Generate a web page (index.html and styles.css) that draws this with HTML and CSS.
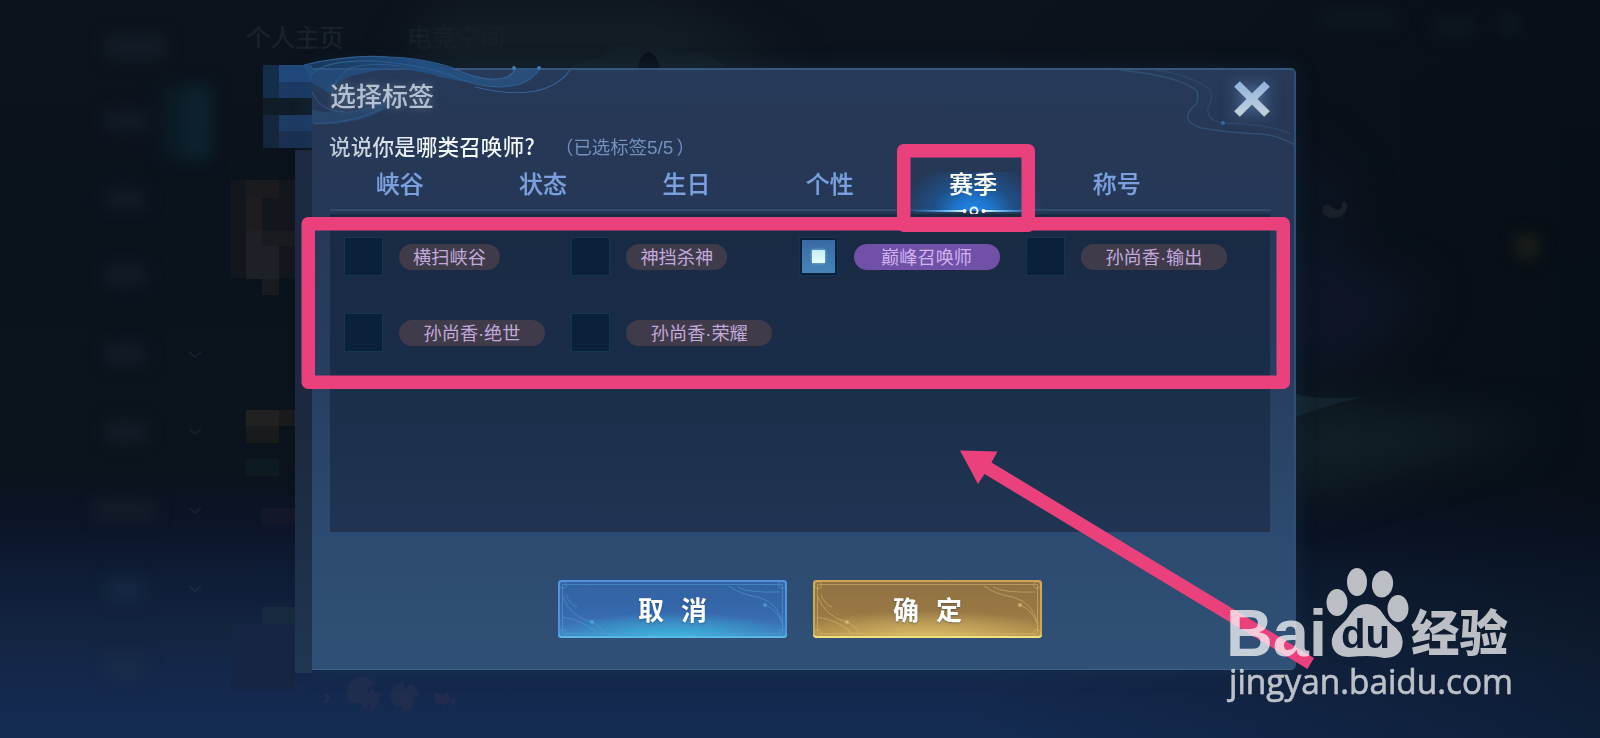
FILE: index.html
```html
<!DOCTYPE html>
<html lang="zh-CN">
<head>
  <meta charset="UTF-8" />
  <meta name="viewport" content="width=device-width, initial-scale=1" />
  <title>选择标签</title>
  <link rel="stylesheet" href="styles.css">
</head>
<body>
  <!-- Dimmed profile page behind the dialog -->
  <svg class="scene" width="1600" height="738" viewBox="0 0 1600 738" aria-hidden="true">
    <defs>
      <filter id="soft" x="-10%" y="-10%" width="120%" height="120%" color-interpolation-filters="sRGB"><feGaussianBlur stdDeviation="8" /></filter>
      <filter id="softer" x="-50%" y="-50%" width="200%" height="200%" color-interpolation-filters="sRGB"><feGaussianBlur stdDeviation="22" /></filter>
      <linearGradient id="tabGlow" x1="0" x2="1" y1="0" y2="0">
        <stop offset="0" stop-color="#0d2b38" stop-opacity="0" />
        <stop offset="1" stop-color="#0d2b38" stop-opacity=".9" />
      </linearGradient>
    </defs>
    <g filter="url(#softer)">
      <path d="M440 10h230l130 60H400z" fill="#1b262c" opacity=".6" />
      <path d="M1290 400l160 20 100 10-90 20-170 50z" fill="#14232a" opacity=".8" />
      <path d="M1290 240l140 50-60 70-80 30z" fill="#0e1526" />
      <path d="M1300 140q90 40 20 160z" fill="#0f172a" opacity=".7" />
    </g>
    <g filter="url(#soft)">
      <path d="M150 85h60v75h-60z" fill="url(#tabGlow)" />
      <path d="M105 36h60v22h-60zM105 112h42v18h-42zM105 190h42v18h-42zM105 265h42v20h-42zM105 344h42v20h-42zM105 422h42v20h-42zM95 502h60v18H95z" fill="#16202a" opacity=".8" />
      <path d="M105 580h40v20h-40zM105 658h40v20h-40z" fill="#1b3049" opacity=".6" />
      <path d="M1320 12h75v14h-75zM1435 20h40v14h-40zM1500 16h18v18h-18z" fill="#0f1a23" />
      <circle cx="1527" cy="246" r="13" fill="#1d1f1a" />
    </g>
    <path d="M560 78q10-18 40-20q12-20 45-8q20-8 34 4q20-8 44 10v6H560z" fill="#16212c" opacity=".5" />
    <path d="M638 68q2-14 11-16q8 3 11 16z" fill="#0a1019" />
    <path d="M1323 206q-3 9 8 12q14 1 16-10q0-5-2-7q-5 1-3 5q-3 7-9 2q-4-5-10-2" fill="#192029" />
    <path d="M1296 394q20 6 66 3q-40 10-66 20z" fill="#13232d" />
    <g fill="none" stroke="#16202c" stroke-width="2">
      <path d="M189 352l6 5 6-5M189 429l6 5 6-5M189 508l6 5 6-5" />
      <path d="M189 586l6 5 6-5" stroke="#182b44" />
      <path d="M325 694l4 4-4 4" stroke="#24304d" />
    </g>
    <g fill="#202d4f">
      <path d="M349 701a15 15 0 0 1 26-17q-9 2-7 9l5-6 2 8 4-5q3 12-7 22l-3-9-4 7q-5-10-9-7-5 2-7-2z" />
      <path d="M391 700a14 14 0 0 1 12-18l3 9 3-8q10 5 10 15l-6-3 1 9q-4 8-11 8l-2-7-4 3z" />
      <path d="M435 692l8 4 5-5 2 9-6 6-9-4zM450 700l7-1-5 8z" />
    </g>
    <text x="246" y="47" class="ghost">个人主页</text>
    <text x="407" y="47" class="ghost ghost-dim">电竞空间</text>
    <!-- hidden player name -->
    <g>
      <path d="M263 65h49v33h-49z" fill="#142d4b" />
      <path d="M279 65h33v17h-33z" fill="#20487a" />
      <path d="M279 82h33v16h-33z" fill="#1b3962" />
      <path d="M263 98h49v17h-49z" fill="#111c29" />
      <path d="M263 115h49v33h-49z" fill="#14253c" />
      <path d="M279 115h33v16h-33z" fill="#1d3b63" />
      <path d="M279 131h33v17h-33z" fill="#1b2f50" />
      <path d="M231 180h64v98h-64z" fill="#13171d" />
      <path d="M246 180h33v18h-33z" fill="#1b1b1f" />
      <path d="M246 198h16v33h-16z" fill="#1f1c1e" />
      <path d="M246 231h33v48h-33z" fill="#1d2027" />
      <path d="M262 231h33v15h-33zM262 279h17v16h-17z" fill="#181b1f" />
      <path d="M246 410h33v16h-33z" fill="#202120" />
      <path d="M279 410h16v16h-16zM246 426h33v17h-33z" fill="#191a1c" />
      <path d="M246 459h33v17h-33z" fill="#0d1a20" />
      <path d="M262 508h33v17h-33z" fill="#121729" />
      <path d="M262 607h33v17h-33z" fill="#172a3f" />
      <path d="M231 624h64v65h-64z" fill="#152543" />
    </g>
  </svg>

  <div class="dialog">
    <div class="dialog-edge"></div>
    <svg class="swirls" width="1001" height="130" viewBox="295 50 1001 130" aria-hidden="true">
      <defs>
        <linearGradient id="wave" x1="0" x2="1" y1="0" y2="0">
          <stop offset="0" stop-color="#24548a" stop-opacity=".5" />
          <stop offset=".5" stop-color="#234e80" />
          <stop offset="1" stop-color="#2b5584" stop-opacity=".7" />
        </linearGradient>
      </defs>
      <path d="M304 65Q350 54 390 57Q425 58 455 70Q485 82 504 78Q512 75 514 68H541Q530 88 500 87Q475 84 440 77Q400 64 365 73Q335 78 330 94L312 83Z" fill="url(#wave)" />
      <path d="M304 65Q350 54 390 57Q425 58 455 69M312 74Q325 60 375 61Q430 66 455 77Q490 92 520 84Q533 78 539 70" fill="none" stroke="#2c5d90" stroke-width="1.2" />
      <path d="M312 110Q350 118 385 100Q395 104 378 113Q350 126 318 124L312 123Z" fill="#295079" opacity=".6" />
      <path d="M312 92Q320 112 345 112M332 96Q332 80 350 68Q370 62 400 66M314 124Q360 122 382 108" fill="none" stroke="#305a88" />
      <path d="M455 69Q488 84 507 77Q514 73 516 69M475 87Q520 98 546 88Q562 82 570 70" fill="none" stroke="#33629a" stroke-width="1.2" />
      <g fill="none" stroke="#304f74" stroke-width="1.5">
        <path d="M1120 70Q1180 76 1197 91Q1200 103 1192 108Q1180 122 1202 128Q1230 133 1262 134Q1280 136 1295 145" />
        <path d="M1155 70Q1190 74 1210 90Q1214 99 1208 107Q1206 120 1222 123Q1270 124 1290 134" opacity=".6" />
      </g>
      <circle cx="1223" cy="123" r="2" fill="#3b6795" />
      <circle cx="514" cy="68" r="2" fill="#4378ac" />
      <circle cx="539" cy="68" r="2" fill="#4378ac" />
    </svg>

    <div class="dialog-header">
      <h1>选择标签</h1>
      <button class="close" aria-label="关闭">
        <svg width="36" height="36" viewBox="0 0 36 36">
          <defs>
            <linearGradient id="cross" x1="0" x2="0" y1="0" y2="36" gradientUnits="userSpaceOnUse">
              <stop offset="0" stop-color="#8fb2dc" />
              <stop offset="1" stop-color="#c6d3de" />
            </linearGradient>
          </defs>
          <path d="M3 3L33 33M33 3L3 33" fill="none" stroke="url(#cross)" stroke-width="8" />
        </svg>
      </button>
    </div>

    <div class="question">
      <h2>说说你是哪类召唤师?</h2>
      <span class="count">（已选标签<span class="num">5/5</span>）</span>
    </div>

    <nav class="tabs">
      <a href="#">峡谷</a>
      <a href="#">状态</a>
      <a href="#">生日</a>
      <a href="#">个性</a>
      <a href="#" class="active">赛季
        <svg class="marker" width="120" height="12" viewBox="0 0 120 12">
          <defs>
            <linearGradient id="beam" x1="0" x2="120" y1="0" y2="0" gradientUnits="userSpaceOnUse">
              <stop offset="0" stop-color="#2b8df0" stop-opacity=".2" />
              <stop offset=".3" stop-color="#7cc4ff" />
              <stop offset=".45" stop-color="#fff" />
              <stop offset=".55" stop-color="#fff" />
              <stop offset=".7" stop-color="#7cc4ff" />
              <stop offset="1" stop-color="#2b8df0" stop-opacity=".2" />
            </linearGradient>
          </defs>
          <path d="M0 5h51v2H0zM69 5h51v2H69z" fill="url(#beam)" />
          <circle cx="60" cy="6" r="3.5" fill="none" stroke="#e9f5ff" stroke-width="2" />
          <circle cx="50.500" cy="6" r="2" fill="#fff" />
          <circle cx="69.500" cy="6" r="2" fill="#fff" />
        </svg>
      </a>
      <a href="#">称号</a>
    </nav>

    <div class="tag-list">
      <label class="tag"><i class="box"></i><span class="pill">横扫峡谷</span></label>
      <label class="tag"><i class="box"></i><span class="pill">神挡杀神</span></label>
      <label class="tag"><i class="box checked"></i><span class="pill wide selected">巅峰召唤师</span></label>
      <label class="tag"><i class="box"></i><span class="pill wide">孙尚香·输出</span></label>
      <label class="tag"><i class="box"></i><span class="pill wide">孙尚香·绝世</span></label>
      <label class="tag"><i class="box"></i><span class="pill wide">孙尚香·荣耀</span></label>
    </div>

    <div class="actions">
      <button class="btn btn-cancel">
        <svg class="trim" width="229" height="58" viewBox="0 0 229 58">
          <path d="M4.500 4.500h220v49h-220z" />
          <path d="M4 15Q12 37 34 42Q42 45 46 53M4 37Q25 40 39 53M8 15Q12 25 19 27M171 6Q184 15 200 17Q222 23 225 47M180 7Q190 13 222 12M207 25Q219 30 224 43" />
          <circle cx="5" cy="5" r="3.500" /><circle cx="224" cy="5" r="3.500" />
          <circle cx="5" cy="53" r="3.500" /><circle cx="224" cy="53" r="3.500" />
          <g class="dots"><circle cx="34" cy="42" r="1.800" /><circle cx="207" cy="25" r="1.800" /></g>
        </svg>
        <span>取消</span>
      </button>
      <button class="btn btn-ok">
        <svg class="trim" width="229" height="58" viewBox="0 0 229 58">
          <path d="M4.500 4.500h220v49h-220z" />
          <path d="M4 15Q12 37 34 42Q42 45 46 53M4 37Q25 40 39 53M8 15Q12 25 19 27M171 6Q184 15 200 17Q222 23 225 47M180 7Q190 13 222 12M207 25Q219 30 224 43" />
          <circle cx="5" cy="5" r="3.500" /><circle cx="224" cy="5" r="3.500" />
          <circle cx="5" cy="53" r="3.500" /><circle cx="224" cy="53" r="3.500" />
          <g class="dots"><circle cx="34" cy="42" r="1.800" /><circle cx="207" cy="25" r="1.800" /></g>
        </svg>
        <span>确定</span>
      </button>
    </div>
  </div>

  <!-- Pink guide marks and watermark -->
  <svg class="overlay" width="1600" height="738" viewBox="0 0 1600 738">
    <g fill="none" stroke="#ea417c" stroke-width="13.500" stroke-linejoin="round">
      <rect x="308.250" y="223.750" width="975" height="158.500" />
      <rect x="903.750" y="150.750" width="124.500" height="74.500" />
    </g>
    <path d="M960 450.500L997.500 451.500L991.500 462.500L1314 658L1307.500 669L984.500 474L978 484Z" fill="#ea417c" />

    <defs>
      <mask id="duCut">
        <rect x="1320" y="560" width="100" height="110" fill="#fff" />
        <text x="1341" y="648" class="logo-du" textLength="49" lengthAdjust="spacingAndGlyphs">du</text>
      </mask>
    </defs>
    <g class="watermark">
      <text x="1226" y="655.500" class="logo-bai" textLength="101" lengthAdjust="spacingAndGlyphs">Bai</text>
      <g mask="url(#duCut)">
        <ellipse cx="1337" cy="602.500" rx="10.500" ry="13.500" />
        <ellipse cx="1357" cy="582" rx="10" ry="14" />
        <ellipse cx="1382.500" cy="584" rx="10.500" ry="13.500" transform="rotate(8 1382.500 584)" />
        <ellipse cx="1398" cy="608.500" rx="10.500" ry="13.500" />
        <path d="M1367 604Q1377 604 1383 614Q1388 622 1396 628Q1405 637 1402 647Q1399 658 1384 658Q1376 656 1367 656Q1358 656 1349 657Q1335 657 1332 645Q1330 635 1340 626Q1346 621 1351 613Q1357 604 1367 604Z" />
      </g>
      <text x="1411" y="651" class="logo-cn" textLength="97" lengthAdjust="spacingAndGlyphs">经验</text>
      <text x="1229" y="693.500" class="logo-url" textLength="284" lengthAdjust="spacingAndGlyphs">jingyan.baidu.com</text>
    </g>
  </svg>
</body>
</html>
```
FILE: styles.css
```css
* {
  box-sizing: border-box;
  margin: 0;
  padding: 0;
  font-family: "Noto Sans CJK SC", "Liberation Sans", sans-serif;
}
body {
  position: relative;
  width: 1600px;
  height: 738px;
  overflow: hidden;
  padding: 68px 0 0 312px;
  background:
    linear-gradient(90deg, rgba(3, 10, 14, 0) 60%, rgba(3, 10, 14, 0.4) 100%),
    linear-gradient(#0c131c 0, #0a121c 200px, #0b131c 470px, #0c152a 530px, #0f1d37 580px, #13243f 630px, #15284c 680px, #142c54 738px);
}
button {
  border: none;
  background: none;
  cursor: pointer;
}
.scene,
.overlay {
  position: absolute;
  left: 0;
  top: 0;
  pointer-events: none;
}
.ghost {
  font-size: 24.5px;
  fill: #19232a;
  stroke: #19232a;
  stroke-width: 0.6px;
}
.ghost-dim {
  fill: #152129;
  stroke: #152129;
}

/* Dialog */
.dialog {
  position: relative;
  display: flex;
  flex-direction: column;
  width: 984px;
  height: 602px;
  padding: 0 24px 0 18px;
  border-top: 2px solid #37577e;
  border-right: 2px solid #304f76;
  border-bottom: 1px solid #3d6288;
  border-radius: 0 5px 5px 0;
  background: linear-gradient(#273a59 0, #263856 60px, #263857 150px, #283f61 320px, #2d4a70 465px, #305177 600px);
  box-shadow: 0 0 22px rgba(35, 80, 110, 0.28);
}
.dialog-edge {
  position: absolute;
  left: -17px;
  top: 80px;
  width: 17px;
  height: 523px;
  background: linear-gradient(#1b2943, #1b2a3f 300px, #203653);
}
.swirls {
  position: absolute;
  left: -17px;
  top: -20px;
}
.dialog-header,
.question,
.tabs,
.tag-list,
.actions {
  position: relative;
}
.dialog-header {
  display: flex;
  justify-content: space-between;
  align-items: center;
  height: 49px;
}
h1 {
  font-size: 26px;
  font-weight: 500;
  color: #b3c0d2;
  text-shadow: 0 0 10px rgba(180, 190, 210, 0.35);
}
.close {
  width: 36px;
  height: 36px;
  margin-top: 8px;
  filter: drop-shadow(0 0 8px rgba(120, 165, 215, 0.6));
}
.question {
  display: flex;
  align-items: center;
  height: 53px;
}
h2 {
  width: 226px;
  margin: -1px 0 0 -1px;
  font-size: 21.7px;
  font-weight: 500;
  white-space: nowrap;
  color: transparent;
  background: linear-gradient(90deg, #b9c3d2, #f4f8ff 45%);
  -webkit-background-clip: text;
  background-clip: text;
}
.count {
  margin-top: 1px;
  font-size: 18.4px;
  color: #7290bd;
}
.num {
  margin-right: 3px;
  font-family: "Liberation Sans", sans-serif;
  font-size: 19px;
}
.tabs {
  display: flex;
  width: 941px;
  height: 39px;
  border-bottom: 2px solid #2e4b6a;
}
.tabs a {
  position: relative;
  left: -2px;
  flex-shrink: 0;
  width: 143.4px;
  height: 39px;
  line-height: 22px;
  text-align: center;
  font-size: 24px;
  font-weight: 500;
  color: #7ba0dd;
  -webkit-text-stroke: 0.2px currentColor;
  text-decoration: none;
}
.tabs .active {
  color: #fff;
  background: radial-gradient(ellipse 72px 50px at 50% 100%, #2186ea 0, #1e75cc 25%, rgba(28, 90, 155, 0.7) 55%, rgba(30, 75, 125, 0) 100%);
}
.marker {
  position: absolute;
  left: 12px;
  bottom: -6px;
}

/* Tag checkboxes */
.tag-list {
  display: grid;
  grid-template-columns: repeat(4, 227.3px);
  grid-auto-rows: 39px;
  row-gap: 37px;
  width: 940px;
  height: 318px;
  margin-top: 3px;
  padding: 23px 0 0 14px;
  background: linear-gradient(#192a43, #1a2d48 150px, #1f3553);
}
.tag {
  display: flex;
  align-items: center;
}
.box {
  width: 39px;
  height: 39px;
  margin-right: 16px;
  border: 1px solid #153653;
  background: #0b2039;
}
.box.checked {
  display: flex;
  align-items: center;
  justify-content: center;
  background: linear-gradient(#3869a3, #4685b8) content-box, #0b2039;
  padding: 2px;
}
.box.checked::after {
  content: "";
  width: 13px;
  height: 13px;
  background: linear-gradient(#c5ecfa, #e6ffff);
  box-shadow: 0 0 3px #8bc3e2;
}
.pill {
  width: 101px;
  height: 26px;
  border-radius: 13px;
  line-height: 29px;
  text-align: center;
  font-family: "Liberation Sans", "Noto Sans CJK SC", sans-serif;
  font-size: 18.2px;
  color: #c2a9dc;
  background: #403b4a;
}
.pill.wide {
  width: 146px;
}
.pill.selected {
  color: #cfb2ee;
  background: #7150a8;
}

/* Buttons */
.actions {
  display: flex;
  justify-content: center;
  gap: 26px;
  padding-top: 48px;
}
.btn {
  position: relative;
  width: 229px;
  height: 58px;
  border-radius: 3px;
  font-size: 26px;
  font-weight: 700;
  color: #fff;
}
.btn span {
  position: relative;
  top: -1px;
  letter-spacing: 17px;
  margin-right: -17px;
  text-shadow: 0 1px 2px rgba(20, 40, 80, 0.4);
}
.trim {
  position: absolute;
  left: 0;
  top: 0;
  fill: none;
  opacity: 0.5;
}
.btn-cancel {
  background: radial-gradient(ellipse 130px 26px at 50% 100%, #3cb7dc, rgba(60, 170, 215, 0)), linear-gradient(#31629f, #3769ae 60%, #407fc0);
  box-shadow: inset 0 -2px 1px #57bce9, inset 0 0 0 2px #5590dc;
}
.btn-cancel .trim {
  stroke: #55a5dc;
}
.btn-cancel .dots {
  fill: #5cdcff;
}
.btn-ok {
  background: radial-gradient(ellipse 140px 28px at 50% 100%, #d9bc68, rgba(205, 170, 90, 0)), linear-gradient(#8f7043, #997944 60%, #b08c4a);
  box-shadow: inset 0 -2px 1px #f4e481, inset 0 0 0 2px #cda552;
}
.btn-ok .trim {
  stroke: #e3c177;
}
.btn-ok .dots {
  fill: #fff3a0;
}

/* Watermark */
.watermark {
  fill: #fff;
  opacity: 0.72;
}
.logo-bai {
  font: 700 66px "Liberation Sans", Arial, sans-serif;
}
.logo-du {
  font: 700 41px "Liberation Sans", Arial, sans-serif;
  fill: #000;
}
.logo-cn {
  font: 900 49px "Noto Sans CJK SC", sans-serif;
}
.logo-url {
  font: 500 34px "Open Sans", "Noto Sans", sans-serif;
  stroke: #fff;
  stroke-width: 0.6px;
}
```
